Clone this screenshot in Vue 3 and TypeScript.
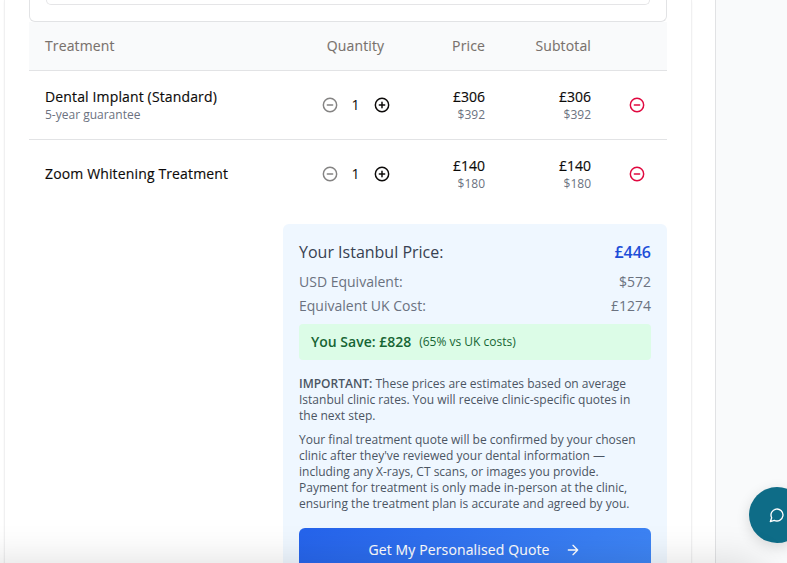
<script setup lang="ts">
interface Item {
  name: string
  note?: string
  qty: number
  gbp: number
  usd: number
}

const items: Item[] = [
  { name: 'Dental Implant (Standard)', note: '5-year guarantee', qty: 1, gbp: 306, usd: 392 },
  { name: 'Zoom Whitening Treatment', qty: 1, gbp: 140, usd: 180 },
]
</script>

<template>
  <div class="page">
    <main class="main">
      <section class="card">
        <div class="picker"><div class="picker-inner"></div></div>

        <div class="row head">
          <span>Treatment</span>
          <span class="center">Quantity</span>
          <span class="right">Price</span>
          <span class="right">Subtotal</span>
          <span></span>
        </div>

        <div v-for="item in items" :key="item.name" class="row item">
          <div>
            <div class="name">{{ item.name }}</div>
            <div v-if="item.note" class="sub">{{ item.note }}</div>
          </div>
          <div class="qty">
            <button class="icon-btn disabled" aria-label="Decrease">
              <svg class="icon" viewBox="0 0 24 24"><circle cx="12" cy="12" r="10" /><path d="M8 12h8" /></svg>
            </button>
            <span class="count">{{ item.qty }}</span>
            <button class="icon-btn" aria-label="Increase">
              <svg class="icon" viewBox="0 0 24 24"><circle cx="12" cy="12" r="10" /><path d="M8 12h8M12 8v8" /></svg>
            </button>
          </div>
          <div class="right">
            <div class="name">£{{ item.gbp }}</div>
            <div class="sub">${{ item.usd }}</div>
          </div>
          <div class="right">
            <div class="name">£{{ item.gbp * item.qty }}</div>
            <div class="sub">${{ item.usd * item.qty }}</div>
          </div>
          <div class="remove">
            <button class="icon-btn danger" aria-label="Remove">
              <svg class="icon" viewBox="0 0 24 24"><circle cx="12" cy="12" r="10" /><path d="M8 12h8" /></svg>
            </button>
          </div>
        </div>

        <aside class="summary">
          <div class="line total"><span>Your Istanbul Price:</span><strong>£446</strong></div>
          <div class="line usd"><span>USD Equivalent:</span><span>$572</span></div>
          <div class="line uk"><span>Equivalent UK Cost:</span><span>£1274</span></div>
          <div class="save"><strong>You Save: £828</strong><span>(65% vs UK costs)</span></div>
          <p class="text first">
            <strong>IMPORTANT:</strong> These prices are estimates based on average Istanbul clinic rates. You will
            receive clinic-specific quotes in the next step.
          </p>
          <p class="text">
            Your final treatment quote will be confirmed by your chosen clinic after they've reviewed your dental
            information — including any X-rays, CT scans, or images you provide. Payment for treatment is only made
            in-person at the clinic, ensuring the treatment plan is accurate and agreed by you.
          </p>
          <button class="cta">
            <span>Get My Personalised Quote</span>
            <svg class="icon" viewBox="0 0 24 24"><path d="M5 12h14M12 5l7 7-7 7" /></svg>
          </button>
        </aside>
      </section>
    </main>
    <button class="chat" aria-label="Chat">
      <svg class="icon" viewBox="0 0 24 24"><path d="M7.9 20A9 9 0 1 0 4 16.1L2 22Z" /></svg>
    </button>
    <div class="bottom-bar"></div>
  </div>
</template>

<style>
body {
  margin: 0;
  overflow: hidden;
}
</style>

<style scoped>
.page {
  position: relative;
  box-sizing: border-box;
  width: 787px;
  height: 563px;
  overflow: hidden;
  background: #f9fafb;
  color: #0c0a09;
  font-family: 'Open Sans', 'Noto Sans', sans-serif;
  font-size: 14px;
  line-height: 20px;
}
.page * {
  box-sizing: border-box;
}
.main {
  width: 716px;
  height: 563px;
  padding-left: 4px;
  background: #fff;
  border-right: 1px solid #e1e2e4;
}
.card {
  width: 688px;
  height: 700px;
  padding: 0 24px;
  border: solid #f0f0f1;
  border-width: 0 1px;
  box-shadow: 0 1px 2px rgba(0, 0, 0, 0.05);
}
.picker {
  height: 22px;
  padding: 0 16px;
  border: 1px solid #e2e3e5;
  border-top: 0;
  border-radius: 0 0 6px 6px;
}
.picker-inner {
  height: 5px;
  border: 1px solid #e5e5e7;
  border-top: 0;
  border-radius: 0 0 6px 6px;
}
.row {
  display: grid;
  grid-template-columns: 264px 125px 83px 106px 60px;
  align-items: center;
  height: 69px;
  border-bottom: 1px solid #e2e3e5;
}
.row > * {
  padding: 0 16px;
}
.row.head {
  height: 49px;
  background: #f9fafb;
  color: #78716c;
  letter-spacing: 0.13px;
  -webkit-text-stroke: 0.1px currentColor;
}
.row.item:nth-last-child(2) {
  border-bottom-color: transparent;
}
.center {
  text-align: center;
}
.right {
  text-align: right;
}
.name {
  color: #0c0a09;
  letter-spacing: 0.14px;
  -webkit-text-stroke: 0.15px currentColor;
}
.right .name {
  letter-spacing: 0;
}
.sub {
  color: #6b7280;
  font-size: 12px;
  line-height: 16px;
}
.row > .qty {
  display: flex;
  align-items: center;
  justify-content: center;
  padding: 0;
}
.count {
  width: 20px;
  text-align: center;
}
.row > .remove {
  display: flex;
  justify-content: center;
  padding: 0;
}
.icon-btn {
  display: flex;
  align-items: center;
  justify-content: center;
  width: 32px;
  height: 32px;
  padding: 0;
  border: 0;
  background: none;
  color: #0c0a09;
}
.icon-btn.disabled {
  opacity: 0.5;
}
.icon-btn.danger {
  color: #e0083f;
}
.icon {
  width: 16px;
  height: 16px;
  fill: none;
  stroke: currentColor;
  stroke-width: 2;
  stroke-linecap: round;
  stroke-linejoin: round;
}
.icon-btn .icon {
  stroke-width: 2.2;
}
.summary {
  width: 384px;
  margin: 15px 0 0 auto;
  padding: 16px;
  border-radius: 6px;
  background: #eff7ff;
}
.line {
  display: flex;
  justify-content: space-between;
  color: #6b7280;
}
.line.total {
  font-size: 16px;
  line-height: 24px;
  color: #374151;
}
.line.total strong {
  color: #1d4ed8;
  font-weight: 600;
}
.line.usd {
  margin-top: 8px;
}
.line.uk {
  margin-top: 4px;
}
.save {
  display: flex;
  align-items: center;
  gap: 8px;
  height: 36px;
  margin-top: 8px;
  padding: 0 12px;
  border-radius: 4px;
  background: #dcfce7;
  color: #166534;
  font-size: 12px;
}
.save strong {
  font-size: 14px;
  font-weight: 600;
}
.text {
  margin: 8px 0 0;
  color: #4b5563;
  font-size: 12px;
  line-height: 16px;
}
.text.first {
  margin-top: 16px;
}
.text strong {
  font-weight: 600;
}
.cta {
  display: flex;
  align-items: center;
  justify-content: center;
  gap: 15px;
  width: 100%;
  height: 44px;
  margin-top: 16px;
  padding: 0 1px 0 0;
  border: 0;
  border-radius: 6px;
  background: linear-gradient(135deg, #2563eb, #3f86f4);
  color: #fff;
  font: 400 14px/20px 'Open Sans', 'Noto Sans', sans-serif;
}
.cta span {
  letter-spacing: 0.13px;
  -webkit-text-stroke: 0.1px currentColor;
}
.chat {
  position: absolute;
  top: 487px;
  left: 749px;
  display: flex;
  align-items: center;
  justify-content: center;
  width: 56px;
  height: 56px;
  padding: 0;
  border: 0;
  border-radius: 50%;
  background: #0e6c87;
  color: #fff;
  box-shadow: 0 4px 14px rgba(0, 0, 0, 0.14);
}
.bottom-bar {
  position: absolute;
  top: 563px;
  left: -30px;
  width: 790px;
  height: 60px;
  box-shadow: 0 0 40px rgba(0, 0, 0, 0.14);
}
</style>
